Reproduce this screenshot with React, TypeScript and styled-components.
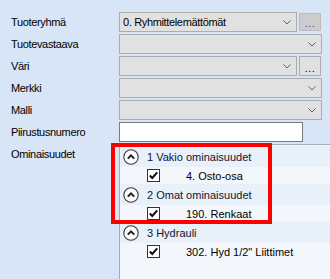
import React from "react";
import styled, { createGlobalStyle } from "styled-components";

const Global = createGlobalStyle`
  html, body {
    margin: 0;
    padding: 0;
    background: #d8e5f6;
  }
  body {
    font-family: "Liberation Sans", Arial, sans-serif;
    font-size: 11px;
    color: #000;
  }
`;

const Form = styled.div`
  position: relative;
  box-sizing: border-box;
  height: 279px;
  padding: 12px 0 0 11px;
  display: grid;
  grid-template-columns: 108px 1fr;
  grid-template-rows: repeat(6, 20px) 1fr;
  row-gap: 2px;
  overflow: hidden;
`;

const Label = styled.div`
  line-height: 20px;
  letter-spacing: -0.35px;
  white-space: nowrap;
`;

const FieldWrap = styled.div`
  display: flex;
  gap: 2px;
`;

const Combo = styled.div<{ $width: number }>`
  box-sizing: border-box;
  width: ${(p) => p.$width}px;
  height: 20px;
  border: 1px solid #adadad;
  background: #e1e1e1;
  display: flex;
  align-items: center;
  padding: 0 5px 0 3px;
  letter-spacing: -0.35px;
`;

const ComboText = styled.span`
  flex: 1;
  white-space: nowrap;
  overflow: hidden;
`;

const DotsButton = styled.div<{ $hover?: boolean }>`
  box-sizing: border-box;
  width: 22px;
  height: ${(p) => (p.$hover ? "18px" : "20px")};
  margin-top: ${(p) => (p.$hover ? "1px" : "0")};
  border: 1px solid ${(p) => (p.$hover ? "#bcbcbc" : "#adadad")};
  background: ${(p) => (p.$hover ? "#cccccc" : "#e1e1e1")};
  color: ${(p) => (p.$hover ? "#3c3cc8" : "#000")};
  display: flex;
  justify-content: center;
  align-items: flex-end;
  line-height: 14px;
  font-size: 11px;
  letter-spacing: 0.5px;
`;

const TextBox = styled.div`
  box-sizing: border-box;
  width: 184px;
  height: 20px;
  border: 1px solid #7a7a7a;
  background: #fff;
`;

const TreePanel = styled.div`
  border-top: 1px solid #a3aec0;
  border-left: 1px solid #a3aab6;
  background: #f3f7fc;
  padding-top: 1px;
  overflow: hidden;
`;

const GroupRow = styled.div`
  height: 21px;
  display: flex;
  align-items: center;
  gap: 8px;
  padding-left: 3px;
  background: #e8f0fa;
  color: #141430;
  white-space: nowrap;
`;

const ItemRow = styled.div`
  height: 17px;
  display: flex;
  align-items: center;
  padding-left: 27px;
  white-space: nowrap;
`;

const ItemText = styled.span`
  margin-left: 26px;
`;

const Highlight = styled.div`
  position: absolute;
  left: 111px;
  top: 143px;
  width: 161px;
  height: 81px;
  box-sizing: border-box;
  border: 4px solid #ff0000;
  pointer-events: none;
`;

const Chevron = () => (
  <svg width="8" height="5" viewBox="0 0 8 5">
    <path d="M0.5 0.5 L4 4 L7.5 0.5" fill="none" stroke="#606060" strokeWidth="1" />
  </svg>
);

const Collapse = () => (
  <svg width="16" height="16" viewBox="0 0 16 16">
    <circle cx="8" cy="8" r="7.2" fill="#fbfbfb" stroke="#3a3a3a" strokeWidth="1.1" />
    <path d="M4.8 9.6 L8 6.4 L11.2 9.6" fill="none" stroke="#1e1e1e" strokeWidth="2" />
  </svg>
);

const Check = () => (
  <svg width="13" height="13" viewBox="0 0 13 13">
    <rect x="0.5" y="0.5" width="12" height="12" fill="#fff" stroke="#333" />
    <path d="M2.8 6.4 L5.3 9 L10.2 3.4" fill="none" stroke="#111" strokeWidth="2.1" />
  </svg>
);

const fields = [
  { label: "Tuoteryhmä", value: "0. Ryhmittelemättömät", button: "hover" },
  { label: "Tuotevastaava", value: "" },
  { label: "Väri", value: "", button: "normal" },
  { label: "Merkki", value: "" },
  { label: "Malli", value: "" },
];

const groups = [
  { title: "1 Vakio ominaisuudet", item: "4. Osto-osa" },
  { title: "2 Omat ominaisuudet", item: "190. Renkaat" },
  { title: "3 Hydrauli", item: '302. Hyd 1/2" Liittimet' },
];

export default function App() {
  return (
    <>
      <Global />
      <Form>
        {fields.map((f) => (
          <React.Fragment key={f.label}>
            <Label>{f.label}</Label>
            <FieldWrap>
              <Combo $width={f.button ? 178 : 203}>
                <ComboText>{f.value}</ComboText>
                <Chevron />
              </Combo>
              {f.button && <DotsButton $hover={f.button === "hover"}>...</DotsButton>}
            </FieldWrap>
          </React.Fragment>
        ))}
        <Label>Piirustusnumero</Label>
        <div>
          <TextBox />
        </div>
        <Label>Ominaisuudet</Label>
        <TreePanel>
          {groups.map((g) => (
            <React.Fragment key={g.title}>
              <GroupRow>
                <Collapse />
                <span>{g.title}</span>
              </GroupRow>
              <ItemRow>
                <Check />
                <ItemText>{g.item}</ItemText>
              </ItemRow>
            </React.Fragment>
          ))}
        </TreePanel>
        <Highlight />
      </Form>
    </>
  );
}
